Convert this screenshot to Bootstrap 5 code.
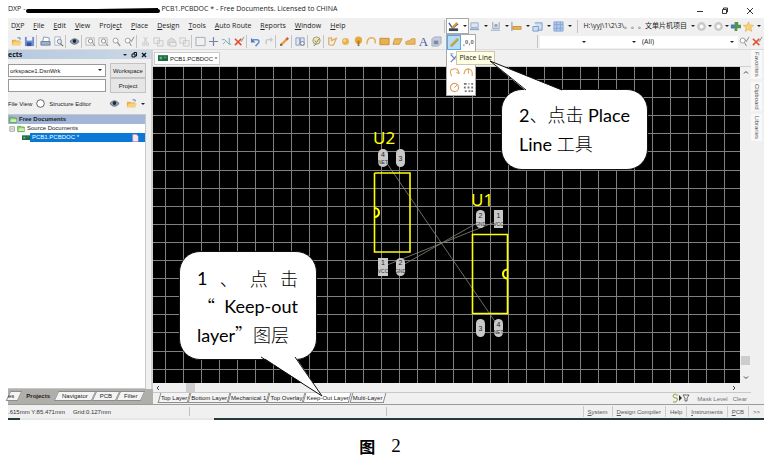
<!DOCTYPE html>
<html lang="zh-CN">
<head>
<meta charset="utf-8">
<meta name="viewport" content="width=device-width, initial-scale=1">
<title>PCB1.PCBDOC</title>
<link href="https://cdn.jsdelivr.net/npm/bootstrap@5.3.0/dist/css/bootstrap.min.css" rel="stylesheet">
<style>
:root{--ui:"Open Sans","Noto Sans","Noto Sans CJK SC",sans-serif;--ms:"Liberation Sans",sans-serif;--face:#f0f0f0}
body{font-family:var(--ui);font-size:7px;line-height:10px;color:#222;background:#fff}
button,select,input{font:inherit;color:inherit;margin:0}
button{border:0;background:none;padding:0;white-space:nowrap}
.title-row{height:18px;padding-top:4px;white-space:nowrap}
.title-text{gap:1px}
.redacted{width:134px;height:6px}
.winbtns{gap:17px;padding-right:10px}
.menu-row{height:16px;background:var(--face)}
.menus{gap:9px;padding-left:3px}
.menus u,.status u{text-underline-offset:1px}
.tool-row{height:16px;background:var(--face);border-bottom:1px solid #dcdcdc}
.tools{padding-left:2px}
.ic{width:13px;height:13px;flex:none;display:flex;align-items:center;justify-content:center}
.ic svg{width:11px;height:11px;display:block}
.letter{font:13px "Liberation Serif",serif;color:#4a5f9c}
.vsep{width:3px;height:13px;flex:none;border-left:1px solid #c4c4c4}
.arr{width:0;height:0;flex:none;border:2px solid transparent;border-top:2px solid #222;border-bottom:0}
.drop{width:21px;gap:3px;flex:none;display:flex;align-items:center}
.place-open{background:#fff;outline:1px solid #a9a9a9;height:14px}
.place-menu{position:absolute;left:-1px;top:15px;width:30px;background:#fff;border:1px solid #a9a9a9;z-index:5;display:grid;grid-template-columns:14px 14px;grid-auto-rows:15px}
.place-menu button{display:flex;align-items:center;justify-content:center;border:1px solid transparent}
.place-menu button.hot{background:#b5dcf8;border-color:#58a8e4}
.tip{position:absolute;left:9px;top:32px;z-index:6;background:#ffffe1;border:1px solid #c8c8a8;padding:1px 2px;white-space:nowrap;color:#222}
.path-pick{padding-left:3px;text-spacing-trim:space-all}
.tail-arr{margin:0 3px 0 2px}
.flat{appearance:none;border:0;border-radius:0;background:#fff;height:12px;padding:0 2px}
.w-net{width:50px}.w-all{width:98px}
.pick{position:relative;display:flex;min-width:0}
.pick .arr{position:absolute;right:4px;top:5px;pointer-events:none}
.left{width:145px;flex:none;background:var(--face);border-right:2px solid #d0d0cc;font-family:var(--ms);font-size:6px}
.left .inner{padding-right:5px}
.phead{height:9px;background:linear-gradient(90deg,#b6c9df,#cbd8e6);font-weight:700;font-size:7px;font-family:var(--ui);color:#111;line-height:9px}
.line-box{border:1px solid #9a9a9a;background:#fff;height:13px;width:100%;min-width:0;padding:0 1px;border-radius:0;appearance:none}
.pbtn{background:#e6e6e6;border:1px solid #c3c3c3;width:36px;height:15px;flex:none;line-height:12px}
.tree{background:#fff;border:1px solid #c8c8c8;border-left:0}
.trow{height:9px;line-height:9px;gap:2px;display:flex;align-items:center;white-space:nowrap;padding-left:1px}
.trow svg{width:8px;height:8px;flex:none}
.trow.top-row{background:#a2b6d8}
.trow.deep{padding-left:14px;gap:0}
.trow.deep span{background:#0a78d7;color:#fff;padding:0 6px 0 2px}
.expander{margin-right:-2px}
.ptabs{height:15px;background:#b0aea8;padding-top:2px;margin-right:-2px}
.slant{position:relative;height:10px;line-height:10px;z-index:0;flex:none}
.slant::before{content:"";position:absolute;inset:0;z-index:-1;background:#f4f4f4;border:1px solid #8d8d8d}
.ptabs .slant{padding:0 6px}
.ptabs .slant:first-child{padding-left:0}
.ptabs .slant::before{transform:skewX(-25deg)}
.ptabs .slant.current::before{background:#b0aea8;border-color:transparent}
.layers .slant{padding:0 2px}
.layers .slant::before{transform:skewX(-15deg);border-top:0}
.layers .slant.current::before{background:#fff}
.editor{min-width:0;background:var(--face)}
.doctabs{height:17px;border-bottom:1px solid #d0d0d0}
.doctab{background:#fff;border:1px solid #ccc;font-family:var(--ms);font-size:6px;height:13px;margin:2px 0 0 1px;padding:0 2px 0 3px;display:flex;align-items:center;gap:2px}
.doctab svg{width:10px;height:7px}
.board{background:#000;min-width:0;overflow:hidden}
.board svg{display:block;width:100%;height:100%}
.vscroll{width:11px}
.hscroll{height:9px;padding:0 6px 0 3px}
.thumb{background:#cdcdcd;width:9px;height:9px}
.layers{height:12px;border-top:1px solid #c8c8c8;font-family:var(--ms);font-size:6px;padding-left:6px}
.masks{gap:5px}
.dock{width:13px;background:var(--face);font-family:var(--ms);font-size:6px;color:#555;gap:3px}
.dock button{writing-mode:vertical-rl;background:#f9f9f9;width:11px;padding:2px 0;line-height:11px}
.status{height:14px;background:var(--face);border-top:1px solid #9b9b9b;font-family:var(--ms);font-size:6px;color:#333}
.status .cell{flex:1;border-left:1px solid #c0c0c0;height:9px}
.status .coords{flex:none;width:181px}
.status button{border-left:1px solid #ccc;padding:0 4px;height:11px;color:#555}
.edge{height:2px;background:linear-gradient(90deg,#243b3b 12px,#e4e8e8 12px,#e4e8e8 206px,#243b3b 206px)}
.shade{position:absolute;z-index:7;color:#000;font-family:Lato,"Noto Sans CJK SC",sans-serif;font-size:18px;line-height:28px}
.shade .cj{font-family:"Noto Sans CJK SC",sans-serif;font-weight:300}
.shade .bubble{background:#fff;border-radius:21px;border:1px solid #111}
.shade svg{position:absolute;overflow:visible;pointer-events:none}
.note-tool{left:501px;top:89px;width:147px}
.note-tool .bubble{padding:10px 16px 11px 17px}
.note-tool svg{left:-12px;top:-29px}
.note-layer{left:179px;top:251px;width:138px}
.note-layer .bubble{padding:12px 18px 10px 17px}
.note-layer svg{left:82px;top:105px}
.cap{height:48px;font-size:19px;font-family:"Liberation Serif","Noto Sans CJK SC",serif;color:#000;padding-top:4px;margin-right:12px}
.cap b{font-size:16px;font-family:"Noto Sans CJK SC",sans-serif}
</style>
</head>
<body>
<svg width="0" height="0" class="position-absolute" aria-hidden="true">
<symbol id="open" viewBox="0 0 12 12"><path d="M1 10V4h4l1 1h4v5z" fill="#e9b04a"/><path d="M1 10l2-4h9l-2 4z" fill="#f7d27c"/><path d="M7 2h3v2" stroke="#4b7fc0" fill="none"/></symbol>
<symbol id="save" viewBox="0 0 12 12"><path d="M1 1h10v10H1z" fill="#6d8fd0"/><path d="M3 1h6v4H3z" fill="#eef3fb"/><path d="M3 7h5v4H3z" fill="#35539b"/></symbol>
<symbol id="print" viewBox="0 0 12 12"><path d="M4 1l6 1v4H3z" fill="#fff" stroke="#7b93b8"/><path d="M1 6h10v4H1z" fill="#9db0cc" stroke="#6e819f"/></symbol>
<symbol id="prev" viewBox="0 0 12 12"><path d="M2 1h6v9H2z" fill="#fff" stroke="#a5afbf"/><circle cx="7" cy="6" r="2.4" fill="#dde8f4" stroke="#889"/><path d="M8 8l3 3" stroke="#777" stroke-width="1.4"/></symbol>
<symbol id="eye" viewBox="0 0 12 12"><path d="M1 6q5-6 10 0q-5 6-10 0z" fill="#8fa9c4" stroke="#567"/><circle cx="6" cy="5.500" r="2" fill="#223"/></symbol>
<symbol id="zfit" viewBox="0 0 12 12"><path d="M1 2h9v8H1z" fill="#f7f7f7" stroke="#b5b5bb"/><circle cx="6" cy="5.500" r="2.300" fill="#fff" stroke="#888"/><path d="M8 7l3 4" stroke="#888"/></symbol>
<symbol id="zoom" viewBox="0 0 12 12"><circle cx="5" cy="5" r="2.700" fill="#fff" stroke="#999"/><path d="M7 7l3 4" stroke="#a88" stroke-width="1.400"/></symbol>
<symbol id="zchk" viewBox="0 0 12 12"><circle cx="4" cy="5" r="2.700" fill="#fff" stroke="#999"/><path d="M6 7l2 4M7 4l1 2 3-5" stroke="#888" fill="none"/></symbol>
<symbol id="cut" viewBox="0 0 12 12"><path d="M4 1l4 7M8 1L4 8" stroke="#c4c4c4"/><circle cx="4" cy="9" r="1.500" stroke="#c4c4c4" fill="none"/><circle cx="8" cy="9" r="1.500" stroke="#c4c4c4" fill="none"/></symbol>
<symbol id="copy" viewBox="0 0 12 12"><path d="M1 2h6v6H1zM5 5h6v6H5z" fill="#eee" stroke="#c8c8c8"/></symbol>
<symbol id="paste" viewBox="0 0 12 12"><path d="M2 5l4-3 4 3v5H2z" fill="#ddd" stroke="#c4c4c4"/><path d="M4 7h7v4H4z" fill="#eee" stroke="#c4c4c4"/></symbol>
<symbol id="sel" viewBox="0 0 12 12"><path d="M1 1.500h10v9H1z" fill="none" stroke="#a0a8b6"/></symbol>
<symbol id="move" viewBox="0 0 12 12"><path d="M6 1v10M1 6h10" stroke="#7486a8" stroke-width="1.300"/></symbol>
<symbol id="desel" viewBox="0 0 12 12"><path d="M1 4h3l5 5h2M9 2v7M2 9l3-3" stroke="#6faab4" fill="none"/></symbol>
<symbol id="xred" viewBox="0 0 12 12"><path d="M1 3l7 7M8 3l-7 7" stroke="#e2512e" stroke-width="1.700"/><path d="M7 5l1 1 3-5" stroke="#888" fill="none"/></symbol>
<symbol id="undo" viewBox="0 0 12 12"><path d="M3 4h5q3 1 1 4l-3 3" stroke="#6a8bd0" stroke-width="1.700" fill="none"/><path d="M1 2v5h5z" fill="#5277c4"/></symbol>
<symbol id="redo" viewBox="0 0 12 12"><path d="M10 4H5q-3 1-1 5" stroke="#c4c8d0" stroke-width="1.500" fill="none"/><path d="M11 4L8 1v6z" fill="#c4c8d0"/></symbol>
<symbol id="pen" viewBox="0 0 12 12"><path d="M2 10l7-7" stroke="#e9a23a" stroke-width="2.600"/><path d="M8 4l2-2" stroke="#d45a4a" stroke-width="2.600"/><path d="M1 11l1-3 2 2z" fill="#555"/></symbol>
<symbol id="book" viewBox="0 0 12 12"><path d="M1 2h4v8H1zM6 2h4v8H6z" fill="#dfe5f2" stroke="#8d9bc0"/><circle cx="8" cy="8" r="2" fill="#fff" stroke="#778"/></symbol>
<symbol id="help" viewBox="0 0 12 12"><circle cx="6" cy="5" r="4" fill="#efe6b4" stroke="#9b9470"/><path d="M4 5l2 2 3-4M3 11l3-3" stroke="#776" fill="none"/></symbol>
<symbol id="route" viewBox="0 0 12 12"><path d="M2 10V2h3v3l6-3M3 10h4l3-7" stroke="#dfb06a" stroke-width="1.500" fill="none"/></symbol>
<symbol id="dot" viewBox="0 0 12 12"><circle cx="6" cy="6" r="3.800" fill="#eab14f"/><circle cx="5" cy="5" r="1.500" fill="#f7d795"/></symbol>
<symbol id="via" viewBox="0 0 12 12"><circle cx="6" cy="4.500" r="4" fill="#e7a83c"/><path d="M6 5v6" stroke="#a07a35" stroke-width="2"/></symbol>
<symbol id="arc" viewBox="0 0 12 12"><path d="M1 9Q1 2 6 2t4 6" stroke="#e6ac55" stroke-width="1.600" fill="none"/></symbol>
<symbol id="fill" viewBox="0 0 12 12"><path d="M1 2.500h10v7H1z" fill="#e9b04d" stroke="#c28c34"/></symbol>
<symbol id="poly" viewBox="0 0 12 12"><path d="M3 3h8l-3 6H1z" fill="#eeb95d" stroke="#c99744"/></symbol>
<symbol id="poly2" viewBox="0 0 12 12"><path d="M1 9V6l4-1 2-2h4v6z" fill="#eeb95d" stroke="#d3a04e"/></symbol>
<symbol id="grid3" viewBox="0 0 12 12"><path d="M1 3l3-2h7v7l-3 3H1z" fill="#c5cddd" stroke="#a5aec2"/><path d="M3 5h5v4H3z" fill="#7f8aaa"/></symbol>
<symbol id="util" viewBox="0 0 12 12"><path d="M1 2l4 6 6-5" stroke="#37589c" stroke-width="1.500" fill="none"/><path d="M4 8l6-6" stroke="#e39b32" stroke-width="2.200"/><path d="M1 8h10v3H1z" fill="#3d4650"/></symbol>
<symbol id="align" viewBox="0 0 12 12"><path d="M2 2h8v5H2z" fill="#dce7f3" stroke="#93abc6"/><path d="M1 8h10v2H1z" fill="#8ba9cc"/></symbol>
<symbol id="find" viewBox="0 0 12 12"><path d="M3 1v7h7V1M1 10h10" stroke="#8a9dbc" fill="none"/><circle cx="6.500" cy="5" r="2" fill="#9aaac2"/></symbol>
<symbol id="dim" viewBox="0 0 12 12"><path d="M1 1v10" stroke="#889"/><path d="M2 6h9v3H2z" fill="#ecb44e" stroke="#c39240"/></symbol>
<symbol id="room" viewBox="0 0 12 12"><path d="M3 2h8v8H6M1 6h6v5H1z" fill="#cfe0f2" stroke="#7599c8"/></symbol>
<symbol id="gr" viewBox="0 0 12 12"><path d="M1 1h10v10H1z" fill="#b4caea"/><path d="M1 1h10v10H1zM1 4h10M1 8h10M4 1v10M8 1v10" stroke="#84a4d4" fill="none"/></symbol>
<symbol id="ring" viewBox="0 0 12 12"><circle cx="6" cy="6" r="3.500" fill="#fff" stroke="#c9c9c9" stroke-width="2.600"/></symbol>
<symbol id="plus" viewBox="0 0 12 12"><path d="M5 1h4v3h3v4H8v3H5V8H1V4h4z" fill="#55934e"/><path d="M1 4h4v4H1z" fill="#4a77bd"/></symbol>
<symbol id="star" viewBox="0 0 12 12"><path d="M6 1l1.500 3.500 4 .3-3 2.500 1 4L6 9.200 2.500 11.300l1-4-3-2.500 4-.3z" fill="#fbd375" stroke="#e7aa45" stroke-width=".7"/></symbol>
<symbol id="pline" viewBox="0 0 12 12"><path d="M2 10l8-8" stroke="#c8ad4a" stroke-width="3"/><path d="M3 10l7-7" stroke="#8a9970"/></symbol>
<symbol id="coord" viewBox="0 0 12 12"><path d="M1 8v2M3 4h2v3H3zM9 4h2v3H9zM7 7v2" stroke="#777" fill="none"/></symbol>
<symbol id="dim2" viewBox="0 0 12 12"><path d="M2 11l8-9M2 3l5 5" stroke="#6a83c8" stroke-width="1.300"/><path d="M1 2h4" stroke="#999"/></symbol>
<symbol id="arc1" viewBox="0 0 12 12"><path d="M3 10Q-1 3 5 2q5-1 6 5l-3-1" stroke="#dda660" stroke-width="1.200" fill="none"/></symbol>
<symbol id="arc2" viewBox="0 0 12 12"><path d="M1 8Q2 2 6 2q5 1 4 8M6 2v5" stroke="#dda660" stroke-width="1.200" fill="none"/></symbol>
<symbol id="circ" viewBox="0 0 12 12"><circle cx="6" cy="6" r="4.500" fill="none" stroke="#e0a262" stroke-width="1.300"/><path d="M6 6l3-3" stroke="#c89"/></symbol>
<symbol id="arrp" viewBox="0 0 12 12"><path d="M1 2h3M6 2h1M9 2h2M1 6h2M5 6h2M9 6h2M2 10h2M6 10h2M9 10h2" stroke="#777" stroke-width="2"/></symbol>
<symbol id="pcb" viewBox="0 0 12 8"><path d="M0 0h12v7H0z" fill="#1d6b41"/><path d="M2 2h3v3H2zM7 2h3v1H7z" fill="#6cae82"/></symbol>
<symbol id="fold" viewBox="0 0 12 10"><path d="M1 1h5l1 1h4v7H1z" fill="#8ccf72" stroke="#4e9340"/><path d="M3 4h8v4H2z" fill="#c7eeb3"/></symbol>
</svg>

<div class="d-flex flex-column min-vh-100">
<main class="flex-grow-1 d-flex flex-column mx-2">
  <header class="title-row d-flex justify-content-between">
    <div class="title-text d-flex"><span>DXP -</span>
      <svg class="redacted mt-1" viewBox="0 0 134 6" preserveAspectRatio="none" aria-hidden="true"><path d="M2 3H132" stroke="#000" stroke-width="4" stroke-linecap="round"/><path d="M70 2l62-1" stroke="#000" stroke-width="2"/></svg>
      <span>PCB1.PCBDOC * - Free Documents. Licensed to CHINA</span></div>
    <div class="winbtns d-flex">
      <button aria-label="Minimize"><svg width="8" height="8"><path d="M1 4.500h6" stroke="#333"/></svg></button>
      <button aria-label="Restore"><svg width="8" height="8"><path d="M1.500 2.500h4v4h-4zM2.500 2V1h4v4H6" stroke="#333" fill="none"/></svg></button>
      <button aria-label="Close"><svg width="8" height="8"><path d="M1 1l6 6M7 1L1 7" stroke="#333"/></svg></button>
    </div>
  </header>

  <nav class="menu-row d-flex align-items-center justify-content-between">
    <div class="menus d-flex">
      <button>D<u>X</u>P</button><button><u>F</u>ile</button><button><u>E</u>dit</button><button><u>V</u>iew</button><button>Proje<u>c</u>t</button><button><u>P</u>lace</button><button><u>D</u>esign</button><button><u>T</u>ools</button><button><u>A</u>uto Route</button><button><u>R</u>eports</button><button><u>W</u>indow</button><button><u>H</u>elp</button>
    </div>
    <div class="d-flex align-items-center">
      <span class="vsep"></span>
      <div class="position-relative d-flex">
        <button class="drop place-open" aria-label="Utilities"><span class="ic"><svg><use href="#util"/></svg></span><span class="arr"></span></button>
        <div class="place-menu">
          <button class="hot" aria-label="Place Line"><svg width="11" height="11"><use href="#pline"/></svg></button><button aria-label="Coordinate"><svg width="11" height="11"><use href="#coord"/></svg></button>
          <button aria-label="Dimension"><svg width="11" height="11"><use href="#dim2"/></svg></button><span></span>
          <button aria-label="Arc"><svg width="11" height="11"><use href="#arc1"/></svg></button><button aria-label="Arc by edge"><svg width="11" height="11"><use href="#arc2"/></svg></button>
          <button aria-label="Circle"><svg width="11" height="11"><use href="#circ"/></svg></button><button aria-label="Array"><svg width="11" height="11"><use href="#arrp"/></svg></button>
        </div>
        <span class="tip" role="tooltip">Place Line</span>
      </div>
      <button class="drop" aria-label="Align"><span class="ic"><svg><use href="#align"/></svg></span><span class="arr"></span></button>
      <button class="drop" aria-label="Find"><span class="ic"><svg><use href="#find"/></svg></span><span class="arr"></span></button>
      <button class="drop" aria-label="Dimensions"><span class="ic"><svg><use href="#dim"/></svg></span><span class="arr"></span></button>
      <button class="drop" aria-label="Rooms"><span class="ic"><svg><use href="#room"/></svg></span><span class="arr"></span></button>
      <button class="drop" aria-label="Grid"><span class="ic"><svg><use href="#gr"/></svg></span><span class="arr"></span></button>
      <span class="vsep ms-1"></span>
      <button class="path-pick d-flex align-items-center gap-1">H:\yyj\1\2\3\。。。文单片机项目 <span class="arr"></span></button>
      <button class="ic" aria-label="Back"><svg><use href="#ring"/></svg></button>
      <span class="arr"></span>
      <button class="ic" aria-label="Forward"><svg><use href="#ring"/></svg></button>
      <span class="arr"></span>
      <button class="ic" aria-label="Add"><svg><use href="#plus"/></svg></button>
      <button class="ic" aria-label="Favorite"><svg><use href="#star"/></svg></button>
      <span class="arr tail-arr"></span>
    </div>
  </nav>

  <div class="tool-row d-flex align-items-center justify-content-between">
    <div class="tools d-flex align-items-center" id="tools"></div>
    <div class="d-flex align-items-center">
      <span class="vsep"></span>
      <label class="pick"><select class="flat w-net" aria-label="Filter net"><option></option></select><span class="arr"></span></label>
      <label class="pick"><select class="flat w-net" aria-label="Filter component"><option></option></select><span class="arr"></span></label>
      <label class="pick"><select class="flat w-all" aria-label="Filter"><option>(All)</option></select><span class="arr"></span></label>
      <button class="ic" aria-label="Apply filter"><svg><use href="#zchk"/></svg></button>
      <button class="ic" aria-label="Clear filter"><svg><use href="#xred"/></svg></button>
    </div>
  </div>

  <div class="flex-grow-1 d-flex">
    <aside class="left d-flex flex-column">
      <div class="phead d-flex justify-content-between"><span>ects</span>
        <span class="d-flex align-items-center gap-1 pe-1"><span class="arr"></span><svg width="6" height="6"><path d="M1 2h3v3H1zM3 2V.5h2.500V4H4" stroke="#111" fill="none"/></svg><svg width="6" height="6"><path d="M1 1l4 4M5 1L1 5" stroke="#111" stroke-width="1.300"/></svg></span></div>
      <div class="inner d-flex flex-column flex-grow-1">
      <div class="d-flex align-items-center gap-1 pt-1">
        <label class="pick flex-grow-1"><select class="line-box" aria-label="Workspace file"><option>orkspace1.DsnWrk</option></select><span class="arr"></span></label>
        <button class="pbtn">Workspace</button></div>
      <div class="d-flex align-items-center gap-1">
        <input class="line-box flex-grow-1" aria-label="Project name"><button class="pbtn">Project</button></div>
      <div class="d-flex align-items-center my-1 gap-1 text-nowrap">
        <span>File View</span>
        <label class="d-flex align-items-center gap-1 flex-grow-1"><svg width="9" height="9"><circle cx="4.500" cy="4.500" r="3.800" fill="#fff" stroke="#444" stroke-width=".8"/></svg><input type="radio" class="visually-hidden" name="view">Structure Editor</label>
        <button class="ic" aria-label="Refresh"><svg><use href="#eye"/></svg></button>
        <button class="drop" aria-label="Open folder"><span class="ic"><svg><use href="#open"/></svg></span><span class="arr"></span></button>
      </div>
      <div class="tree flex-grow-1">
        <div class="trow top-row fw-bold"><svg><use href="#fold"/></svg>Free Documents</div>
        <div class="trow"><svg class="expander" viewBox="0 0 9 8"><path d="M1 1.500h5v5H1zM2 4h3" stroke="#777" fill="none" stroke-width=".8"/></svg><svg><use href="#fold"/></svg>Source Documents</div>
        <div class="trow deep"><svg><use href="#pcb"/></svg><span class="flex-grow-1 d-flex justify-content-between align-items-center">PCB1.PCBDOC *<svg viewBox="0 0 9 8"><path d="M2 0h4l2 2v6H2z" fill="#fde3ea" stroke="#e7a2b4" stroke-width=".6"/></svg></span></div>
      </div></div>
      <div class="ptabs d-flex"><button class="slant">es</button><button class="slant current fw-bold">Projects</button><button class="slant">Navigator</button><button class="slant">PCB</button><button class="slant">Filter</button></div>
    </aside>

    <section class="editor flex-grow-1 d-flex flex-column">
      <div class="doctabs d-flex"><button class="doctab"><svg><use href="#pcb"/></svg>PCB1.PCBDOC *</button></div>
      <div class="flex-grow-1 d-flex">
        <div class="board flex-grow-1 position-relative"><svg class="position-absolute" role="img" aria-label="PCB layout with U1 and U2">
          <path id="mesh" stroke="#808080" fill="none"/>
          <g transform="translate(-153 -67)">
            <g stroke="#8a887a" stroke-width=".8"><path d="M386 162L496 323M387 265L495 222M403 265L477 223"/></g>
            <g fill="none" stroke="#ffff00" stroke-width="1.600"><path d="M374.500 173H410v79H374.500V173M472.500 234.500H507.500V313.500H472.500z"/><path stroke-width="2.200" d="M374.500 217a4.500 4.500 0 0 0 0-9M507.500 269.500a4.500 4.500 0 0 0 0 9"/></g>
            <g fill="#ffff00" font-family="Noto Sans" font-size="17"><text x="373" y="144">U2</text><text x="471" y="206">U1</text></g>
            <g fill="#c9c9c9"><rect x="378" y="149" width="10" height="18" rx="5"/><rect x="396" y="149" width="9" height="18" rx="4.500"/><rect x="378" y="258" width="10" height="18"/><rect x="396" y="258" width="9" height="18" rx="4.500"/><rect x="476" y="210" width="9" height="18" rx="4.500"/><rect x="494" y="210" width="9" height="18"/><rect x="476" y="319" width="9" height="18" rx="4.500"/><rect x="494" y="319" width="9" height="18" rx="4.500"/></g>
            <g fill="#222" font-family="Liberation Sans" font-size="7" text-anchor="middle"><text x="383" y="157">4</text><text x="400.500" y="161">3</text><text x="383" y="265">1</text><text x="400.500" y="265">2</text><text x="480.500" y="218">2</text><text x="498.500" y="218">1</text><text x="480.500" y="331">3</text><text x="498.500" y="327">4</text></g>
            <g fill="#333" font-family="Liberation Sans" font-size="5" text-anchor="middle"><text x="383" y="164">NET</text><text x="383" y="273">VCC</text><text x="400.500" y="273">GND</text><text x="480.500" y="226">GND</text><text x="498.500" y="226">VCC</text><text x="498.500" y="334">NET</text></g>
          </g></svg></div>
        <div class="vscroll d-flex flex-column align-items-center">
          <svg width="8" height="10"><path d="M2 6.500l2-2 2 2" stroke="#444" fill="none"/></svg>
          <div class="thumb mt-auto"></div><svg class="mt-2" width="8" height="10"><path d="M2 3.500l2 2 2-2" stroke="#444" fill="none"/></svg></div>
      </div>
      <div class="hscroll d-flex align-items-center"><svg width="6" height="8"><path d="M3 2L1 4l2 2" stroke="#444" fill="none"/></svg><div class="thumb ms-4"></div><svg class="ms-auto me-2" width="6" height="8"><path d="M2 2l2 2-2 2" stroke="#444" fill="none"/></svg></div>
      <div class="layers d-flex"><button class="slant">Top Layer</button><button class="slant">Bottom Layer</button><button class="slant">Mechanical 1</button><button class="slant">Top Overlay</button><button class="slant current">Keep-Out Layer</button><button class="slant">Multi-Layer</button>
        <span class="masks ms-auto d-flex"><svg width="20" height="10"><path d="M4 1q-3 0-3 2t3 2 0 4H1M5 1v2" stroke="#8ba23a" fill="none"/><path d="M7 2l3 3-3 3z" fill="#333"/><path d="M11 2h6l-2 3v3h-2V5z" fill="#fff" stroke="#444" stroke-width=".8"/></svg><button class="text-secondary">Mask Level</button><button class="text-secondary pe-1">Clear</button></span></div>
    </section>
    <nav class="dock d-flex flex-column align-items-start"><button>Favorites</button><button>Clipboard</button><button>Libraries</button></nav>
  </div>

  <footer class="status d-flex align-items-center"><span class="coords d-flex gap-2"><span>.615mm Y:85.471mm</span><span>Grid:0.127mm</span></span><span class="cell"></span><span class="cell"></span>
    <span class="d-flex"><button><u>S</u>ystem</button><button><u>D</u>esign Compiler</button><button>Help</button><button><u>I</u>nstruments</button><button><u>P</u>CB</button><button>&gt;&gt;</button></span></footer>
  <div class="edge"></div>
</main>
<div class="cap d-flex align-items-center justify-content-center gap-3"><b>图</b><span>2</span></div>
</div>

<div class="shade note-tool"><div class="bubble">2<span class="cj">、点击</span> Place<br>Line <span class="cj">工具</span></div>
  <svg width="90" height="40" viewBox="0 0 90 40"><path d="M37 31L1 1L75 31z" fill="#fff"/><path d="M37 30L1 1L73 30" fill="none" stroke="#111"/></svg></div>
<div class="shade note-layer"><div class="bubble"><div class="d-flex justify-content-between"><span>1</span><span class="cj">、</span><span class="cj">点</span><span class="cj">击</span></div><div class="d-flex justify-content-between"><span class="cj">“</span><span>Keep-out</span></div><div>layer<span class="cj">”图层</span></div></div>
  <svg width="66" height="44" viewBox="0 0 66 44"><path d="M0 0L61 40L34 0z" fill="#fff"/><path d="M0 1L61 40L34 1" fill="none" stroke="#111"/></svg></div>

<script src="https://cdn.jsdelivr.net/npm/bootstrap@5.3.0/dist/js/bootstrap.bundle.min.js"></script>
<script>
const groups=[['open','save'],['print','prev'],['eye'],['zfit','zfit','zoom','zchk'],['cut','copy','paste','copy'],['sel','move','desel','xred'],['undo','redo'],['pen'],['book'],['help'],['route','dot','via','arc','fill','poly','poly2','A','grid3']];
document.getElementById('tools').innerHTML=groups.map(g=>g.map(n=>n==='A'?'<button class="ic letter">A</button>':`<button class="ic" aria-label="${n}"><svg><use href="#${n}"/></svg></button>`).join('')).join('<span class="vsep"></span>');
let d='';
for(let i=0;i<120;i++){const x=Math.round(11.5+i*18.06)+.5,y=Math.round(12+i*18.1)+.5;d+=`M${x} 0V2200M0 ${y}H2200`}
document.getElementById('mesh').setAttribute('d',d);
</script>
</body>
</html>
